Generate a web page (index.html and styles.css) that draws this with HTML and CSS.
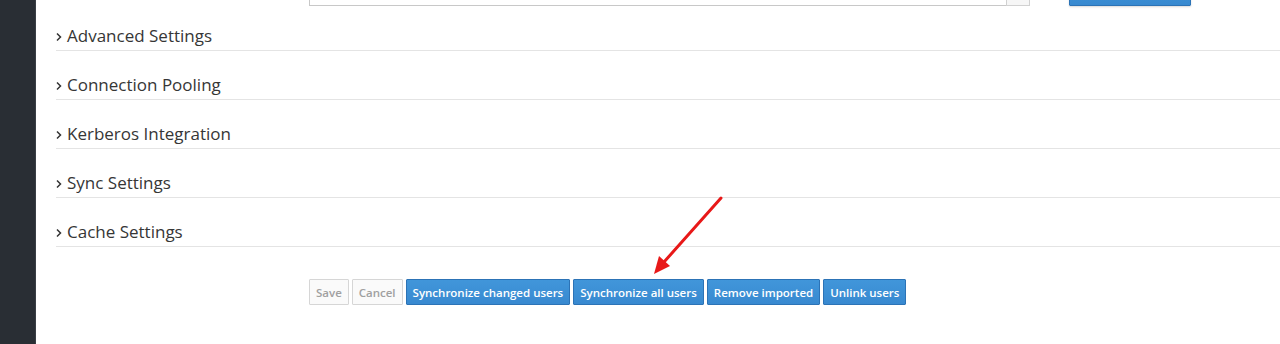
FILE: index.html
```html
<!DOCTYPE html>
<html lang="en">
<head>
  <meta charset="UTF-8" />
  <title>User Federation - LDAP</title>
  <link rel="stylesheet" href="styles.css">
</head>
<body>
  <div class="layout">
    <div class="sidebar"></div>

    <div class="content">
      <div class="form-row">
        <div class="input-group">
          <input type="text" class="form-control" />
          <span class="input-addon"></span>
        </div>
        <button class="btn btn-primary btn-test"></button>
      </div>

      <div class="sections">
        <div class="legend"><svg class="chev" width="6" height="10" viewBox="0 0 6 10"><path d="M1 1.5 L4.5 5 L1 8.5" fill="none" stroke="#333" stroke-width="1.5"/></svg>Advanced Settings</div>
        <div class="legend"><svg class="chev" width="6" height="10" viewBox="0 0 6 10"><path d="M1 1.5 L4.5 5 L1 8.5" fill="none" stroke="#333" stroke-width="1.5"/></svg>Connection Pooling</div>
        <div class="legend"><svg class="chev" width="6" height="10" viewBox="0 0 6 10"><path d="M1 1.5 L4.5 5 L1 8.5" fill="none" stroke="#333" stroke-width="1.5"/></svg>Kerberos Integration</div>
        <div class="legend"><svg class="chev" width="6" height="10" viewBox="0 0 6 10"><path d="M1 1.5 L4.5 5 L1 8.5" fill="none" stroke="#333" stroke-width="1.5"/></svg>Sync Settings</div>
        <div class="legend"><svg class="chev" width="6" height="10" viewBox="0 0 6 10"><path d="M1 1.5 L4.5 5 L1 8.5" fill="none" stroke="#333" stroke-width="1.5"/></svg>Cache Settings</div>
      </div>

      <div class="actions">
        <button class="btn btn-default" disabled>Save</button>
        <button class="btn btn-default" disabled>Cancel</button>
        <button class="btn btn-primary">Synchronize changed users</button>
        <button class="btn btn-primary">Synchronize all users</button>
        <button class="btn btn-primary">Remove imported</button>
        <button class="btn btn-primary">Unlink users</button>
      </div>
    </div>
  </div>

  <!-- red annotation arrow drawn over the screenshot -->
  <svg class="arrow" width="1280" height="344" viewBox="0 0 1280 344">
    <line x1="721" y1="198" x2="664" y2="262" stroke="#e81818" stroke-width="3" stroke-linecap="round"/>
    <polygon points="654,274 659,256 670,266" fill="#e81818"/>
  </svg>
</body>
</html>
```

FILE: styles.css
```css
body {
  margin: 0;
  font-family: 'Open Sans', 'Noto Sans', sans-serif;
  background: #fff;
  color: #363636;
  overflow: hidden;
}

.layout {
  display: flex;
  height: 344px;
}

.sidebar {
  width: 35px;
  flex: none;
  background: #292e34;
  border-right: 1px solid #3a3f45;
}

.content {
  flex: 1;
  padding-left: 20px;
}

.form-row {
  display: flex;
  margin-top: -20px;
  padding-left: 253px;
  height: 26px;
}

.input-group {
  display: flex;
  width: 721px;
  height: 26px;
}

.form-control {
  flex: 1;
  box-sizing: border-box;
  height: 26px;
  margin: 0;
  border: 1px solid #c8c8c8;
  border-right: none;
  padding: 0 6px;
}

.input-addon {
  width: 24px;
  box-sizing: border-box;
  border: 1px solid #d1d1d1;
  background: #f6f6f6;
}

.btn-test {
  margin-left: 39px;
  width: 122px;
  height: 26px;
  box-shadow: 0 1px 2px rgba(0, 0, 0, 0.15);
}

.sections {
  padding-top: 18px;
  display: flex;
  flex-direction: column;
  gap: 22px;
}

.legend {
  display: flex;
  align-items: center;
  font-size: 17px;
  line-height: 24px;
  padding-bottom: 2px;
  border-bottom: 1px solid #e4e4e4;
}

.chev {
  margin-right: 5px;
  margin-top: 1px;
}

.actions {
  display: flex;
  gap: 3px;
  margin-top: 32px;
  padding-left: 253px;
}

.btn {
  box-sizing: border-box;
  height: 26px;
  padding: 0 6px;
  font-family: 'Open Sans', sans-serif;
  font-size: 11.5px;
  font-weight: 600;
  border-radius: 1px;
  cursor: pointer;
}

.btn-default {
  background: #fafafa;
  border: 1px solid #d6d6d6;
  color: #a0a0a0;
}

.btn-primary {
  background: linear-gradient(to bottom, #4196da, #3889d0);
  border: 1px solid #2c73b6;
  color: #fff;
}

.arrow {
  position: absolute;
  top: 0;
  left: 0;
  pointer-events: none;
}
```
